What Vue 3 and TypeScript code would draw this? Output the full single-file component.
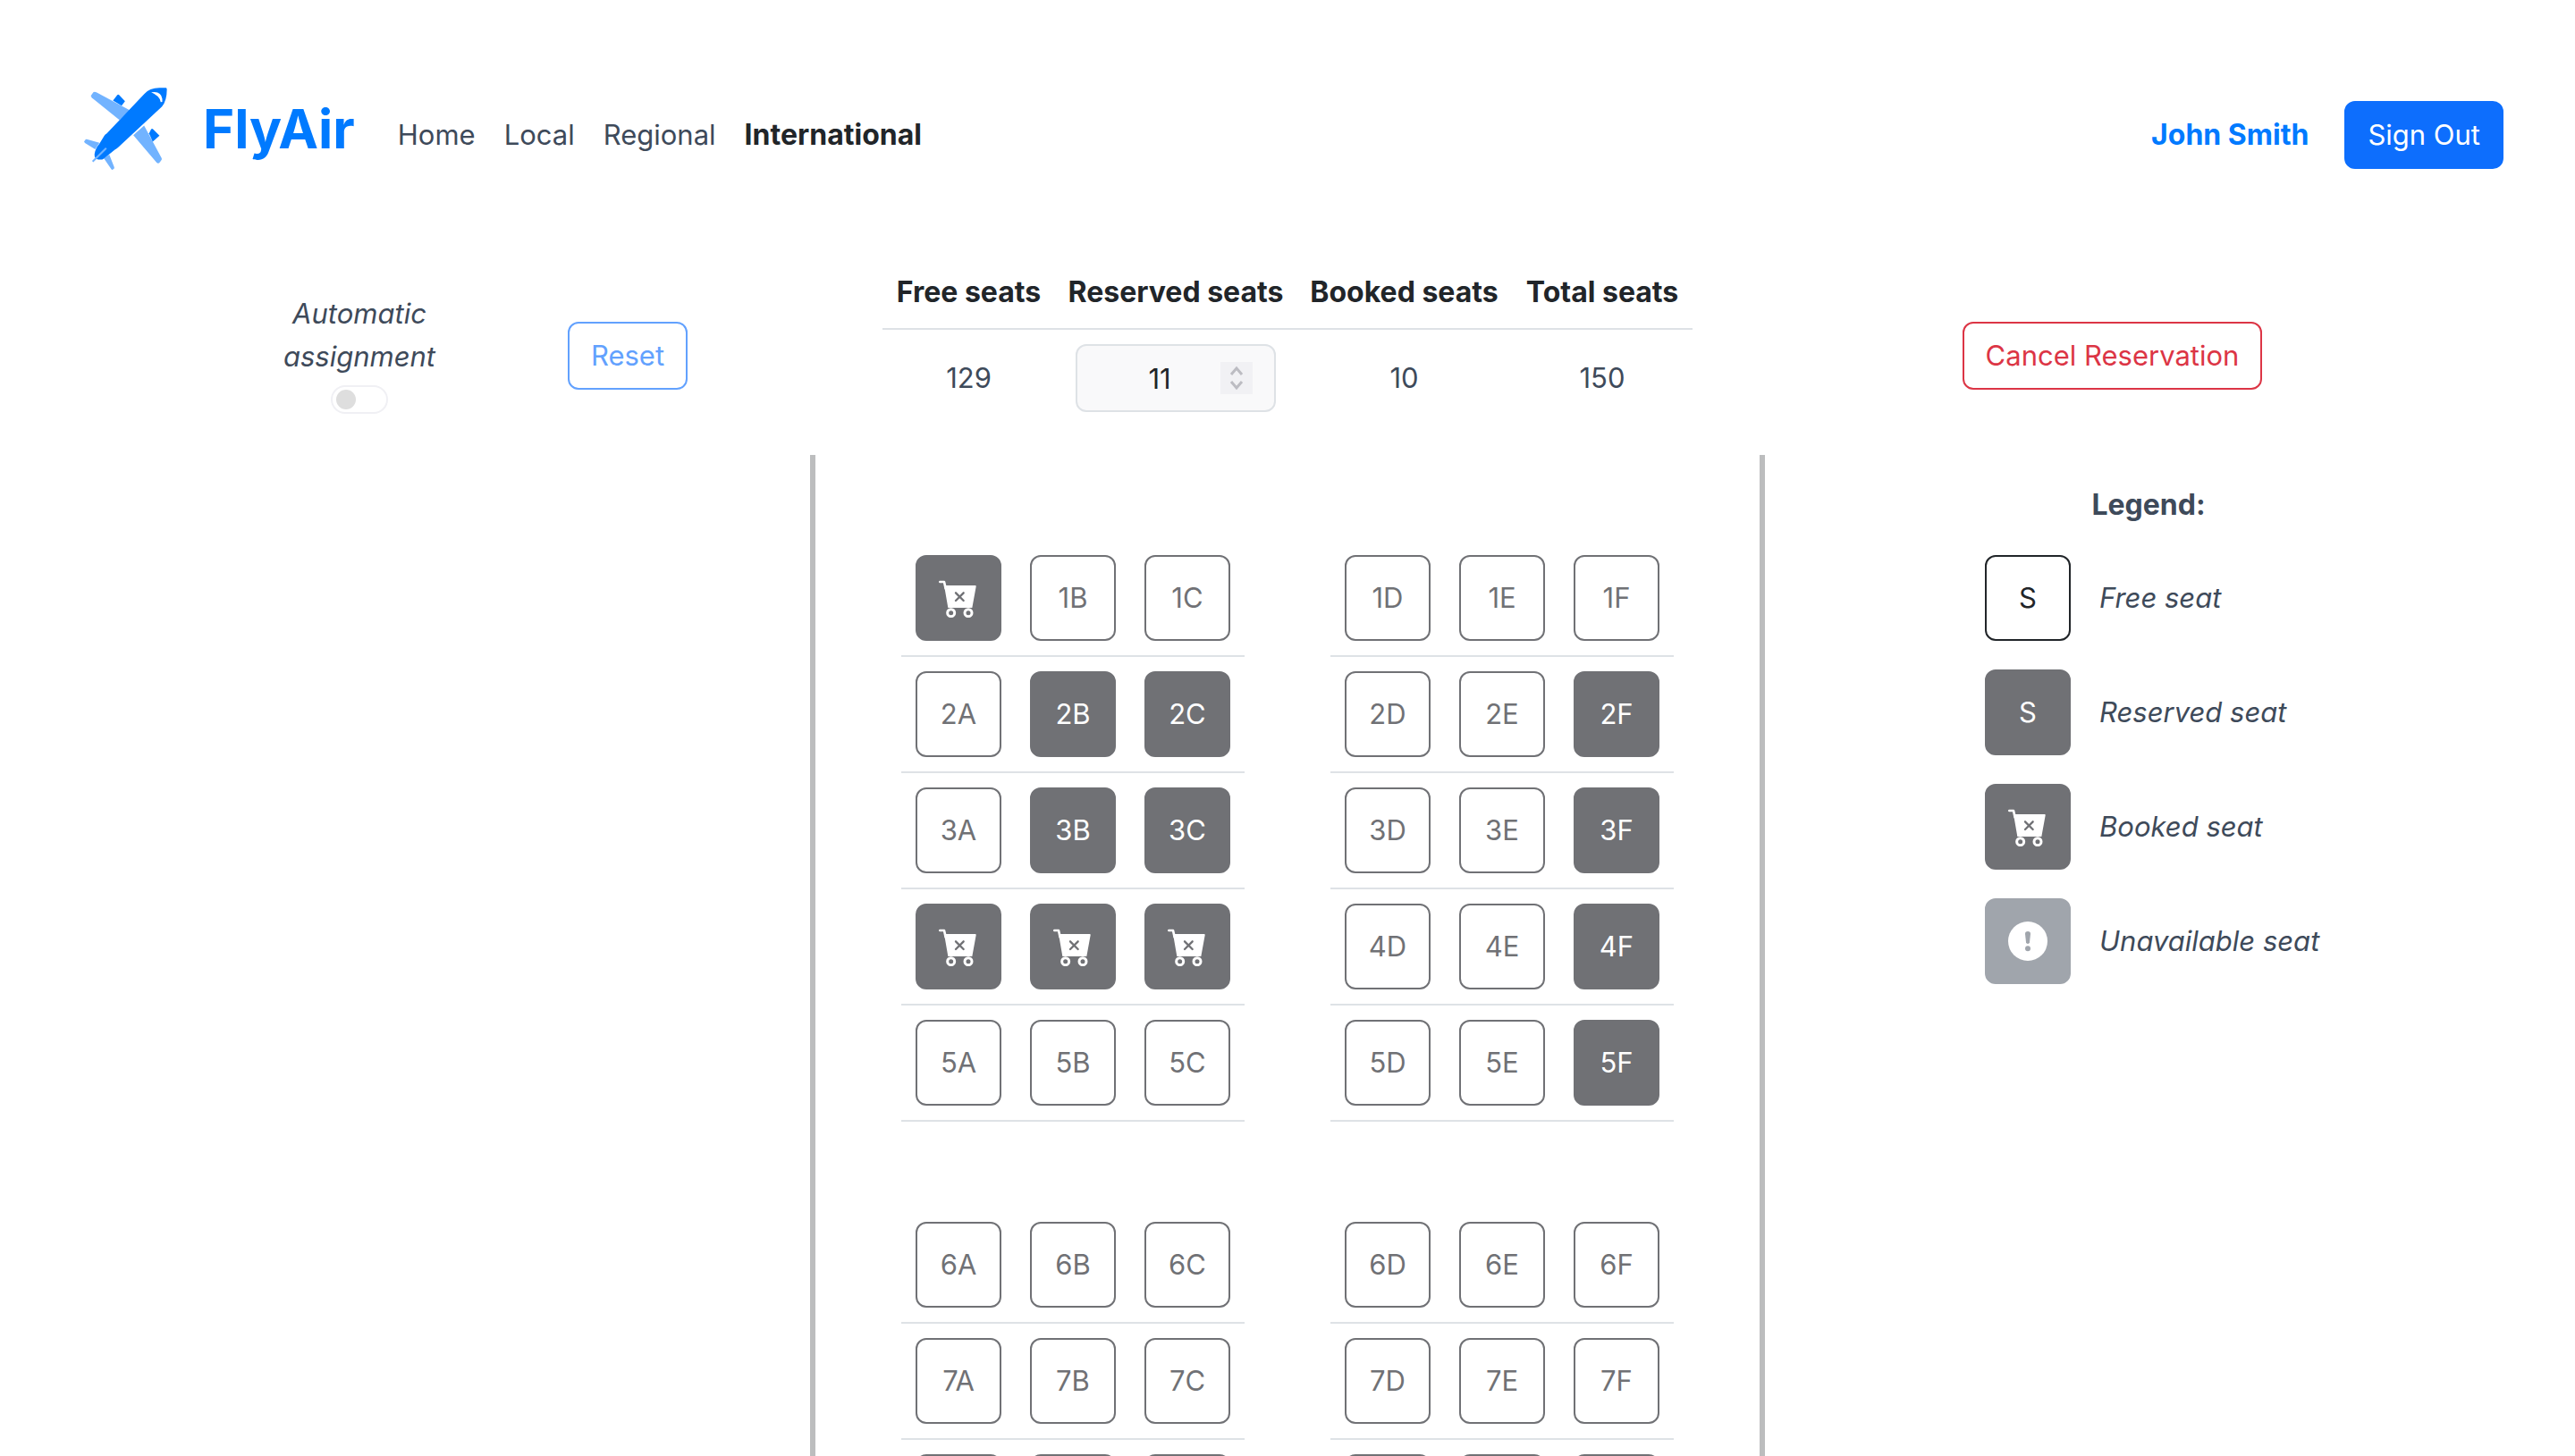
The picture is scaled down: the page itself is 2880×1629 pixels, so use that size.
<script setup lang="ts">
import { ref } from 'vue'

type SeatState = 'free' | 'reserved' | 'booked' | 'unavailable'

interface Seat {
  id: string
  state: SeatState
}

const reserved = new Set(['2B', '2C', '3B', '3C', '2F', '3F', '4F', '5F'])
const booked = new Set(['1A', '4A', '4B', '4C'])

const stateOf = (id: string): SeatState =>
  booked.has(id) ? 'booked' : reserved.has(id) ? 'reserved' : 'free'

const sections: number[][] = [
  [1, 2, 3, 4, 5],
  [6, 7, 8],
]

const sides: string[][] = [
  ['A', 'B', 'C'],
  ['D', 'E', 'F'],
]

const seatsIn = (row: number, letters: string[]): Seat[] =>
  letters.map((l) => ({ id: `${row}${l}`, state: stateOf(`${row}${l}`) }))

const links = ['Home', 'Local', 'Regional', 'International']
const current = 'International'

const legend: { state: SeatState; label: string }[] = [
  { state: 'free', label: 'Free seat' },
  { state: 'reserved', label: 'Reserved seat' },
  { state: 'booked', label: 'Booked seat' },
  { state: 'unavailable', label: 'Unavailable seat' },
]

const automatic = ref(false)
const reservedCount = ref(11)
</script>

<template>
  <div class="page">
    <header class="header">
      <a class="brand" href="#">
        <svg class="logo" viewBox="100 84 270 277" preserveAspectRatio="none" aria-hidden="true">
          <g fill="#72b3ff">
            <path d="M122 112 L130 100 Q134 97 140 100 L248 160 L215 193 L125 118 Z" />
            <path d="M295 212 L352 322 Q354 326 350 330 L345 337 Q341 341 336 337 L260 244 Z" />
            <path d="M100 266 L104 260 Q106 257 111 259 L150 270 L136 292 L103 271 Z" />
            <path d="M182 310 L198 352 Q199 357 195 359 Q191 363 188 358 L164 322 Z" />
          </g>
          <g fill="#007aff">
            <path d="M208 109 Q211 106 214 109 L233 130 L222 145 L194 128 Z" />
            <path d="M318 224 Q321 221 324 224 L345 246 L323 266 L311 238 Z" />
            <path d="M366 85 Q369 85 369 90 Q369 128 353 148 L212 284 Q208 289 200 293 L164 323 Q158 328 146 326 Q133 323 134 308 Q136 290 150 273 L166 246 Q168 242 174 238 L296 105 Q312 86 345 85 Z" />
          </g>
          <path d="M318 100 Q350 94 354 122 L354 132 L349 133 Q346 112 318 100 Z" fill="#fff" />
          <path d="M128 333 L172 288" stroke="#72b3ff" stroke-width="6" fill="none" />
        </svg>
        <span class="brand-name">FlyAir</span>
      </a>
      <nav class="nav">
        <a
          v-for="link in links"
          :key="link"
          href="#"
          class="nav-link"
          :class="{ active: link === current }"
        >{{ link }}</a>
      </nav>
      <div class="account">
        <a href="#" class="user">John Smith</a>
        <button type="button" class="btn btn-primary">Sign Out</button>
      </div>
    </header>

    <section class="toolbar">
      <div class="actions">
        <div class="cell">
          <label class="auto">
            <span>Automatic<br>assignment</span>
            <input v-model="automatic" type="checkbox" role="switch" class="switch">
          </label>
        </div>
        <div class="cell">
          <button type="button" class="btn btn-reset">Reset</button>
        </div>
      </div>

      <table class="summary">
        <thead>
          <tr>
            <th scope="col">Free seats</th>
            <th scope="col">Reserved seats</th>
            <th scope="col">Booked seats</th>
            <th scope="col">Total seats</th>
          </tr>
        </thead>
        <tbody>
          <tr>
            <td>129</td>
            <td>
              <div class="stepper">
                <input v-model="reservedCount" type="number" class="count" aria-label="Reserved seats">
                <svg class="spin" viewBox="0 0 36 36" aria-hidden="true">
                  <path d="M12 14 L18 7 L24 14 M12 22 L18 29 L24 22" />
                </svg>
              </div>
            </td>
            <td>10</td>
            <td>150</td>
          </tr>
        </tbody>
      </table>

      <div class="cancel">
        <button type="button" class="btn btn-danger">Cancel Reservation</button>
      </div>
    </section>

    <main class="body">
      <div class="cabin">
        <div v-for="(rows, s) in sections" :key="s" class="section">
          <div v-for="letters in sides" :key="letters[0]" class="side">
            <div v-for="row in rows" :key="row" class="row">
              <button
                v-for="seat in seatsIn(row, letters)"
                :key="seat.id"
                type="button"
                class="seat"
                :class="seat.state"
                :aria-label="seat.id"
              >
                <svg v-if="seat.state === 'booked'" class="icon" viewBox="0 0 132 132" aria-hidden="true">
                  <path d="M4 12 H18 L23 34" class="handle" />
                  <path d="M18 24 H122 Q126 24 125 28 L112 99 H31 Z" class="basket" />
                  <circle cx="41" cy="116" r="12" class="wheel" />
                  <circle cx="99" cy="116" r="12" class="wheel" />
                  <path d="M57 49 L83 75 M83 49 L57 75" class="cross" />
                </svg>
                <template v-else>{{ seat.id }}</template>
              </button>
            </div>
          </div>
        </div>
      </div>

      <aside class="legend">
        <h2 class="legend-title">Legend:</h2>
        <ul class="legend-list">
          <li v-for="item in legend" :key="item.state" class="legend-item">
            <span class="seat sample" :class="item.state">
              <svg v-if="item.state === 'booked'" class="icon" viewBox="0 0 132 132" aria-hidden="true">
                <path d="M4 12 H18 L23 34" class="handle" />
                <path d="M18 24 H122 Q126 24 125 28 L112 99 H31 Z" class="basket" />
                <circle cx="41" cy="116" r="12" class="wheel" />
                <circle cx="99" cy="116" r="12" class="wheel" />
                <path d="M57 49 L83 75 M83 49 L57 75" class="cross" />
              </svg>
              <svg v-else-if="item.state === 'unavailable'" class="icon" viewBox="0 0 132 132" aria-hidden="true">
                <circle cx="66" cy="66" r="66" fill="#fff" />
                <path d="M57 41 Q57 33 66 33 Q75 33 75 41 L72 70 Q71 75 66 75 Q61 75 60 70 Z" class="mark" />
                <circle cx="66" cy="91" r="9" class="mark" />
              </svg>
              <template v-else>S</template>
            </span>
            <span>{{ item.label }}</span>
          </li>
        </ul>
      </aside>
    </main>
  </div>
</template>

<style>
body {
  margin: 0;
  background: #fff;
}
</style>

<style scoped>
.page {
  --blue: #007aff;
  --slate: #3e4a5a;
  --ink: #212529;
  --line: #dee2e6;
  --seat: #707175;
  height: 100vh;
  overflow-y: auto;
  scrollbar-width: none;
  box-sizing: border-box;
  font-family: Inter, "Liberation Sans", sans-serif;
  font-size: 31px;
  line-height: 48px;
  color: var(--slate);
}

.page *,
.page *::before {
  box-sizing: border-box;
}

a {
  color: inherit;
  text-decoration: none;
}

.header {
  display: flex;
  align-items: center;
  padding: 96px 80px 81px 94px;
}

.brand {
  display: flex;
  align-items: center;
  gap: 40px;
  height: 96px;
  margin-bottom: 14px;
  color: var(--blue);
}

.logo {
  width: 93px;
  height: 92px;
}

.brand-name {
  font-size: 60px;
  line-height: 96px;
  font-weight: 700;
}

.nav {
  display: flex;
  margin-left: 32px;
}

.nav-link {
  padding: 0 16px;
}

.nav-link.active {
  color: var(--ink);
  font-size: 32px;
  font-weight: 700;
}

.account {
  display: flex;
  align-items: center;
  gap: 40px;
  margin-left: auto;
}

.user {
  color: var(--blue);
  font-size: 32px;
  font-weight: 700;
}

.btn {
  height: 76px;
  padding: 0 24px;
  border: 2px solid transparent;
  border-radius: 12px;
  background: transparent;
  font: inherit;
  white-space: nowrap;
}

.btn-primary {
  background: #0d6efd;
  border-color: #0d6efd;
  color: #fff;
}

.btn-reset {
  border-color: #62a1fe;
  color: #62a1fe;
}

.btn-danger {
  border-color: #dc3545;
  color: #dc3545;
}

.toolbar,
.body {
  display: grid;
  grid-template-columns: 1fr 1068px 1fr;
}

.toolbar {
  padding-bottom: 32px;
}

.actions {
  display: flex;
  justify-content: flex-end;
  padding: 40px 54px 0 0;
}

.cell {
  display: flex;
  justify-content: center;
  align-items: flex-start;
  width: 300px;
}

.cell .btn {
  margin-top: 33px;
}

.auto {
  display: flex;
  flex-direction: column;
  align-items: center;
  gap: 8px;
  text-align: center;
  font-style: italic;
}

.switch {
  appearance: none;
  display: flex;
  align-items: center;
  width: 64px;
  height: 32px;
  margin: 0;
  padding: 0 4px;
  border: 2px solid #f0f0f4;
  border-radius: 16px;
}

.switch::before {
  content: "";
  width: 22px;
  height: 22px;
  border-radius: 50%;
  background: #dedede;
}

.switch:checked {
  justify-content: flex-end;
}

.summary {
  justify-self: center;
  width: 906px;
  table-layout: fixed;
  border-collapse: separate;
  border-spacing: 0;
  text-align: center;
}

.summary th {
  padding: 16px 0;
  border-bottom: 2px solid var(--line);
  color: var(--ink);
  font-size: 32px;
  font-weight: 700;
  white-space: nowrap;
}

.summary th:nth-child(1) {
  width: 193px;
}

.summary th:nth-child(2) {
  width: 270px;
}

.summary th:nth-child(3) {
  width: 241px;
}

.summary td {
  padding: 16px 0;
}

.stepper {
  position: relative;
  width: 224px;
  height: 76px;
  margin: 0 auto;
}

.count {
  appearance: textfield;
  display: block;
  width: 100%;
  height: 100%;
  padding: 0 60px 0 24px;
  border: 2px solid var(--line);
  border-radius: 12px;
  background: #f9f9fa;
  color: var(--ink);
  font: inherit;
  text-align: center;
}

.count::-webkit-inner-spin-button {
  appearance: none;
  margin: 0;
}

.spin {
  position: absolute;
  top: 20px;
  right: 26px;
  width: 36px;
  height: 36px;
  background: #f1f1f4;
  fill: none;
  stroke: #bcbcc2;
  stroke-width: 3;
  pointer-events: none;
}

.cancel {
  display: flex;
  justify-content: center;
  align-items: flex-start;
  padding: 73px 129px 0 0;
}

.cabin {
  grid-column: 2;
  border: solid #bcbdbe;
  border-width: 0 6px;
}

.section {
  display: flex;
  justify-content: center;
  gap: 96px;
  padding-top: 96px;
}

.row {
  display: flex;
  gap: 32px;
  padding: 16px;
  border-bottom: 2px solid var(--line);
}

.seat {
  display: flex;
  align-items: center;
  justify-content: center;
  flex: none;
  width: 96px;
  height: 96px;
  padding: 0;
  border: 2px solid var(--seat);
  border-radius: 12px;
  background: transparent;
  color: var(--seat);
  font: inherit;
}

.seat.reserved,
.seat.booked {
  background: var(--seat);
  color: #fff;
}

.seat.unavailable {
  border-color: #a0a5ac;
  background: #a0a5ac;
}

.sample.free {
  border-color: var(--ink);
  color: var(--ink);
}

.icon {
  width: 44px;
  height: 44px;
}

.handle {
  fill: none;
  stroke: #fff;
  stroke-width: 8;
  stroke-linecap: round;
  stroke-linejoin: round;
}

.basket {
  fill: #fff;
}

.wheel {
  fill: none;
  stroke: #fff;
  stroke-width: 9;
}

.cross {
  fill: none;
  stroke: var(--seat);
  stroke-width: 7;
  stroke-linecap: round;
}

.mark {
  fill: #a0a5ac;
}

.legend {
  justify-self: center;
  padding: 32px 48px 0 0;
}

.legend-title {
  margin: 0 0 32px;
  font-size: 32px;
  line-height: 48px;
  font-weight: 700;
  text-align: center;
}

.legend-list {
  display: flex;
  flex-direction: column;
  gap: 32px;
  width: 366px;
  margin: 0;
  padding: 0;
  list-style: none;
}

.legend-item {
  display: flex;
  align-items: center;
  gap: 32px;
  font-style: italic;
  white-space: nowrap;
}

.legend-item .sample {
  font-style: normal;
}
</style>
